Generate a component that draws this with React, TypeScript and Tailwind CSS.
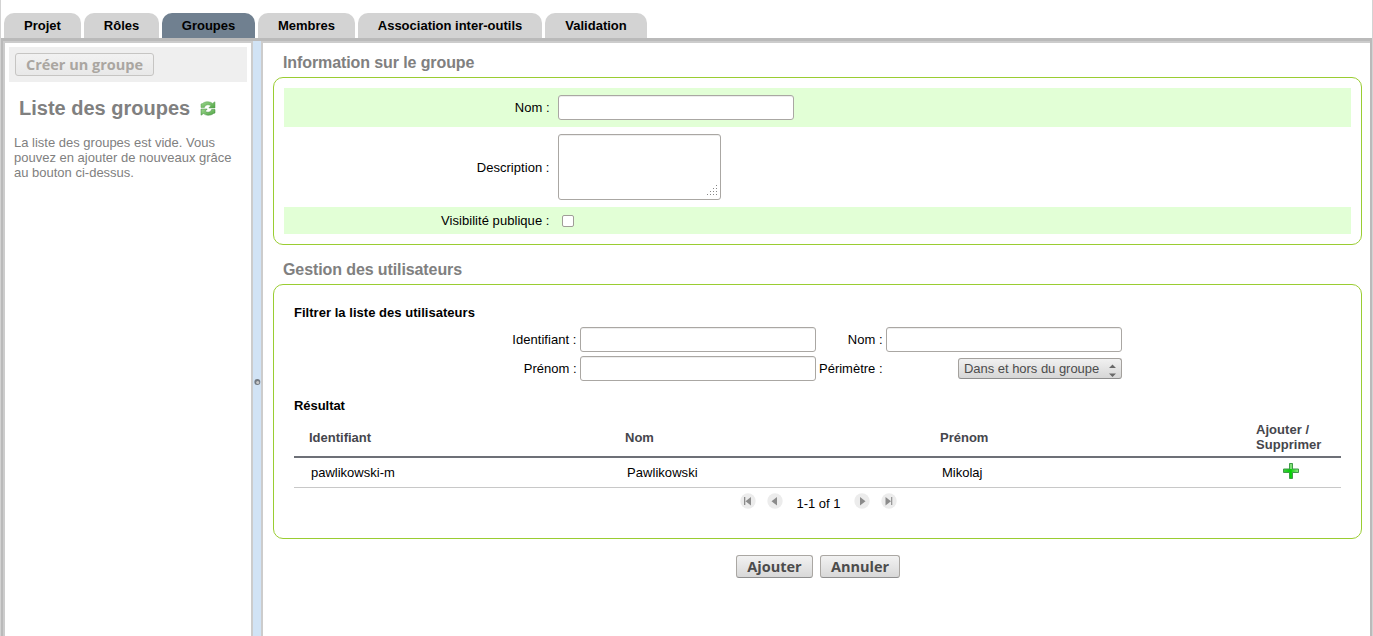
import React from "react";

const tabs = [
  { label: "Projet", width: "w-[77px]" },
  { label: "Rôles", width: "w-[75px]" },
  { label: "Groupes", width: "w-[93px]", active: true },
  { label: "Membres", width: "w-[97px]" },
  { label: "Association inter-outils", width: "w-[184px]" },
  { label: "Validation", width: "w-[102px]" },
];

const field =
  "block rounded-[3px] border border-[#aaa7a3] bg-white shadow-[inset_0_1px_0_#eeeeee] outline-none";
const pushButton =
  "flex items-center justify-center rounded-[3px] border bg-linear-to-b pt-[2px] font-['Open_Sans',sans-serif] text-[14.5px] leading-none font-bold";
const heading =
  "mb-[5px] ml-[10px] h-[18px] text-[16px] leading-[18px] font-bold tracking-[-0.1px] text-[#808080]";

function RefreshIcon() {
  return (
    <svg width="16" height="16" viewBox="0 0 16 16" className="mt-px ml-[10px]">
      <defs>
        <linearGradient id="refresh" x1="0" y1="0" x2="1" y2="1">
          <stop offset="0" stopColor="#9ed790" />
          <stop offset="1" stopColor="#4fa443" />
        </linearGradient>
      </defs>
      <path
        d="M1 6.500V3L2.500 2.500C4 1.200 6 .7 8 .8c2 .1 3.400.7 4.400 1.600L15 .8V7H8.800l2-2.200C8.500 3 5.300 3.600 4.400 6.500z"
        fill="url(#refresh)"
        stroke="#5aa352"
        strokeWidth=".5"
      />
      <path
        d="M15 8.500V12l-1.500.5C12 13.800 10 14.300 8 14.200c-2-.1-3.400-.7-4.400-1.600L1 14.200V8H7.200l-2 2.200c2.300 1.800 5.500 1.200 6.400-1.700z"
        fill="url(#refresh)"
        stroke="#3f873b"
        strokeWidth=".5"
      />
    </svg>
  );
}

function PlusIcon() {
  return (
    <svg width="16" height="16" viewBox="0 0 16 16">
      <defs>
        <linearGradient id="plus" x1="0" y1="0" x2="1" y2="0">
          <stop offset="0" stopColor="#3fd03f" />
          <stop offset=".45" stopColor="#06cc06" />
          <stop offset="1" stopColor="#93ea86" />
        </linearGradient>
      </defs>
      <path d="M6.500.5h3v5.500h6v3.500h-6v6h-3v-6h-6V6h6z" fill="url(#plus)" stroke="#3f9a48" />
      <path d="M7 1h2v5H7z" fill="#7fe077" />
      <path d="M6.500 7h2v8h-1.500z" fill="#08cf08" />
    </svg>
  );
}

function PagerIcon({ kind }: { kind: "first" | "prev" | "next" | "last" }) {
  const back = kind === "first" || kind === "prev";
  return (
    <svg width="16" height="16" viewBox="0 0 16 16">
      <circle cx="8" cy="8" r="7.700" fill="#ececec" />
      {kind === "first" && <path d="M4 4h1.300v8H4zM11 4v8.500L5.500 8.200z" fill="#8b8b8b" />}
      {kind === "prev" && <path d="M10 4v8.500L4.500 8.200z" fill="#8b8b8b" />}
      {!back && <path d={kind === "next" ? "M6 4v8.500L11.500 8.200z" : "M4.500 4v8.500L10 8.200z"} fill="#8b8b8b" />}
      {kind === "last" && <path d="M10 4h1.300v8H10z" fill="#999" />}
    </svg>
  );
}

function Sidebar() {
  return (
    <aside className="w-[246px] shrink-0 px-1 pt-1 text-[#808080]">
      <div className="flex h-[35px] items-start bg-[#efefef] pt-[6px] pl-[6px]">
        <button className={`${pushButton} h-[23px] w-[139px] border-[#c6c5c3] from-[#f2f2f2] to-[#e8e8e8] text-[#aaa6a1]`}>
          Créer un groupe
        </button>
      </div>
      <h1 className="mt-[14px] ml-[10px] flex h-6 items-center text-[20px] leading-6 font-bold">
        Liste des groupes
        <RefreshIcon />
      </h1>
      <p className="mt-[15px] ml-[5px] w-[228px] text-[13px] leading-[15px]">
        La liste des groupes est vide. Vous pouvez en ajouter de nouveaux grâce au bouton ci-dessus.
      </p>
    </aside>
  );
}

function GroupInfo() {
  return (
    <section className="h-[168px] rounded-[10px] border border-[#9acd32] px-[10px] pt-[10px]">
      <div className="flex h-[39px] items-center bg-[#e2ffd6]">
        <label className="w-[265.500px] text-right">Nom :</label>
        <input className={`${field} ml-[8.500px] h-[25px] w-[236px]`} />
      </div>
      <div className="flex h-20 items-center">
        <label className="w-[265.500px] text-right tracking-[0.04px]">Description :</label>
        <div className={`${field} ml-[8.500px] flex h-[66px] w-[163px] items-end justify-end pr-[2px] pb-[3px]`}>
          <svg width="11" height="11" viewBox="0 0 11 11" fill="#888">
            <path d="M9 0h1v1H9zM6 3h1v1H6zM9 3h1v1H9zM3 6h1v1H3zM6 6h1v1H6zM9 6h1v1H9zM0 9h1v1H0zM3 9h1v1H3zM6 9h1v1H6zM9 9h1v1H9z" />
          </svg>
        </div>
      </div>
      <div className="flex h-[27px] items-center bg-[#e2ffd6]">
        <label className="w-[265.500px] text-right tracking-[0.05px]">Visibilité publique :</label>
        <input type="checkbox" className="ml-[12.500px] h-3 w-3 appearance-none rounded-[2px] border border-[#a09d98] bg-white" />
      </div>
    </section>
  );
}

function Users() {
  return (
    <section className="h-[255px] rounded-[10px] border border-[#9acd32] px-5 pt-5">
      <h3 className="h-[15px] font-bold tracking-[0.03px]">Filtrer la liste des utilisateurs</h3>
      <div className="mt-[7px] grid grid-cols-[283px_236px_64px_236px] grid-rows-[25px_25px] items-center gap-x-[3px] gap-y-1">
        <label className="pr-[0.500px] text-right tracking-[0.05px]">Identifiant :</label>
        <input className={`${field} h-[25px] w-full`} />
        <label className="pr-[0.500px] text-right">Nom :</label>
        <input className={`${field} h-[25px] w-full`} />
        <label className="pr-[0.500px] text-right">Prénom :</label>
        <input className={`${field} h-[25px] w-full`} />
        <label className="whitespace-nowrap">Périmètre :</label>
        <button className="flex h-[21px] w-[164px] items-center justify-between justify-self-end rounded-[3px] border border-[#a4a19d] border-b-[#8d8d8d] bg-linear-to-b from-[#f1f1f1] to-[#d6d6d6] pr-[5px] pl-[5px] tracking-[-0.03px] text-[#4c4c4c]">
          Dans et hors du groupe
          <svg width="7" height="13" viewBox="0 0 7 13" fill="#686868" className="mt-[3px]">
            <path d="M0 4h7L3.500.5zM0 9.500h7L3.500 13z" />
          </svg>
        </button>
      </div>
      <h3 className="mt-[17px] h-[15px] font-bold tracking-[-0.05px]">Résultat</h3>
      <div className="mt-[9px] grid h-[36px] grid-cols-[316px_315px_316px_100px] items-center border-b-2 border-[#6d7077] pb-[5px] font-bold text-[#46464c]">
        <span className="pl-[15px]">Identifiant</span>
        <span className="pl-[15px]">Nom</span>
        <span className="pl-[15px]">Prénom</span>
        <span className="pl-[15px] tracking-[0.05px]">Ajouter / Supprimer</span>
      </div>
      <div className="grid h-[30px] grid-cols-[316px_315px_316px_100px] items-center border-b border-[#c8c8c8]">
        <span className="pl-[17px]">pawlikowski-m</span>
        <span className="pl-[17px] tracking-[0.05px]">Pawlikowski</span>
        <span className="pl-[17px]">Mikolaj</span>
        <span className="flex justify-center pb-[3px]"><PlusIcon /></span>
      </div>
      <div className="mt-[5px] flex h-[19px] items-start justify-center pl-[2px]">
        <PagerIcon kind="first" />
        <span className="ml-[11px]"><PagerIcon kind="prev" /></span>
        <span className="mx-[13px] pt-[3px]">1-1 of 1</span>
        <PagerIcon kind="next" />
        <span className="ml-[11px]"><PagerIcon kind="last" /></span>
      </div>
    </section>
  );
}

export default function App() {
  return (
    <div className="flex h-[636px] w-[1373px] flex-col overflow-hidden border-x border-[#d3d3d3] bg-white font-['Liberation_Sans',Arial,sans-serif] text-[13px] leading-[15px] text-black">
      <nav className="flex h-[38px] shrink-0 items-end gap-[3px] pl-[3px]">
        {tabs.map((tab) => (
          <a
            key={tab.label}
            className={`${tab.width} ${tab.active ? "bg-[#708090]" : "bg-[#d3d3d3]"} flex h-[25px] items-center justify-center rounded-t-[10px] font-bold whitespace-nowrap`}
          >
            {tab.label}
          </a>
        ))}
      </nav>
      <div className="flex min-h-0 flex-1 border-x-2 border-t-3 border-[#bababa]">
        <div className="flex min-w-0 flex-1">
          <div className="flex shrink-0 border-x-2 border-t-2 border-[#cccccc]">
            <Sidebar />
          </div>
          <div className="flex w-2 shrink-0 items-center justify-end bg-[#d1e3f5] pt-[86px]">
            <svg width="7" height="8" viewBox="0 0 7 8">
              <circle cx="3.300" cy="4" r="3" fill="#747b83" />
              <circle cx="3.700" cy="4.500" r="1.500" fill="#c9c9c9" />
            </svg>
          </div>
          <main className="min-w-0 flex-1 border-t-2 border-l-2 border-[#cccccc] pr-2 pl-[10px]">
            <h2 className={`${heading} mt-[11px]`}>Information sur le groupe</h2>
            <GroupInfo />
            <h2 className={`${heading} mt-[16px]`}>Gestion des utilisateurs</h2>
            <Users />
            <div className="mt-4 flex justify-center gap-[7px]">
              <button className={`${pushButton} h-[23px] w-[77px] border-[#aaa7a3] border-b-[#8f8f8f] from-[#f2f2f2] to-[#d8d8d8] pl-px text-[#4c4c4c]`}>Ajouter</button>
              <button className={`${pushButton} h-[23px] w-[80px] border-[#aaa7a3] border-b-[#8f8f8f] from-[#f2f2f2] to-[#d8d8d8] pl-px text-[#4c4c4c]`}>Annuler</button>
            </div>
          </main>
        </div>
      </div>
    </div>
  );
}
